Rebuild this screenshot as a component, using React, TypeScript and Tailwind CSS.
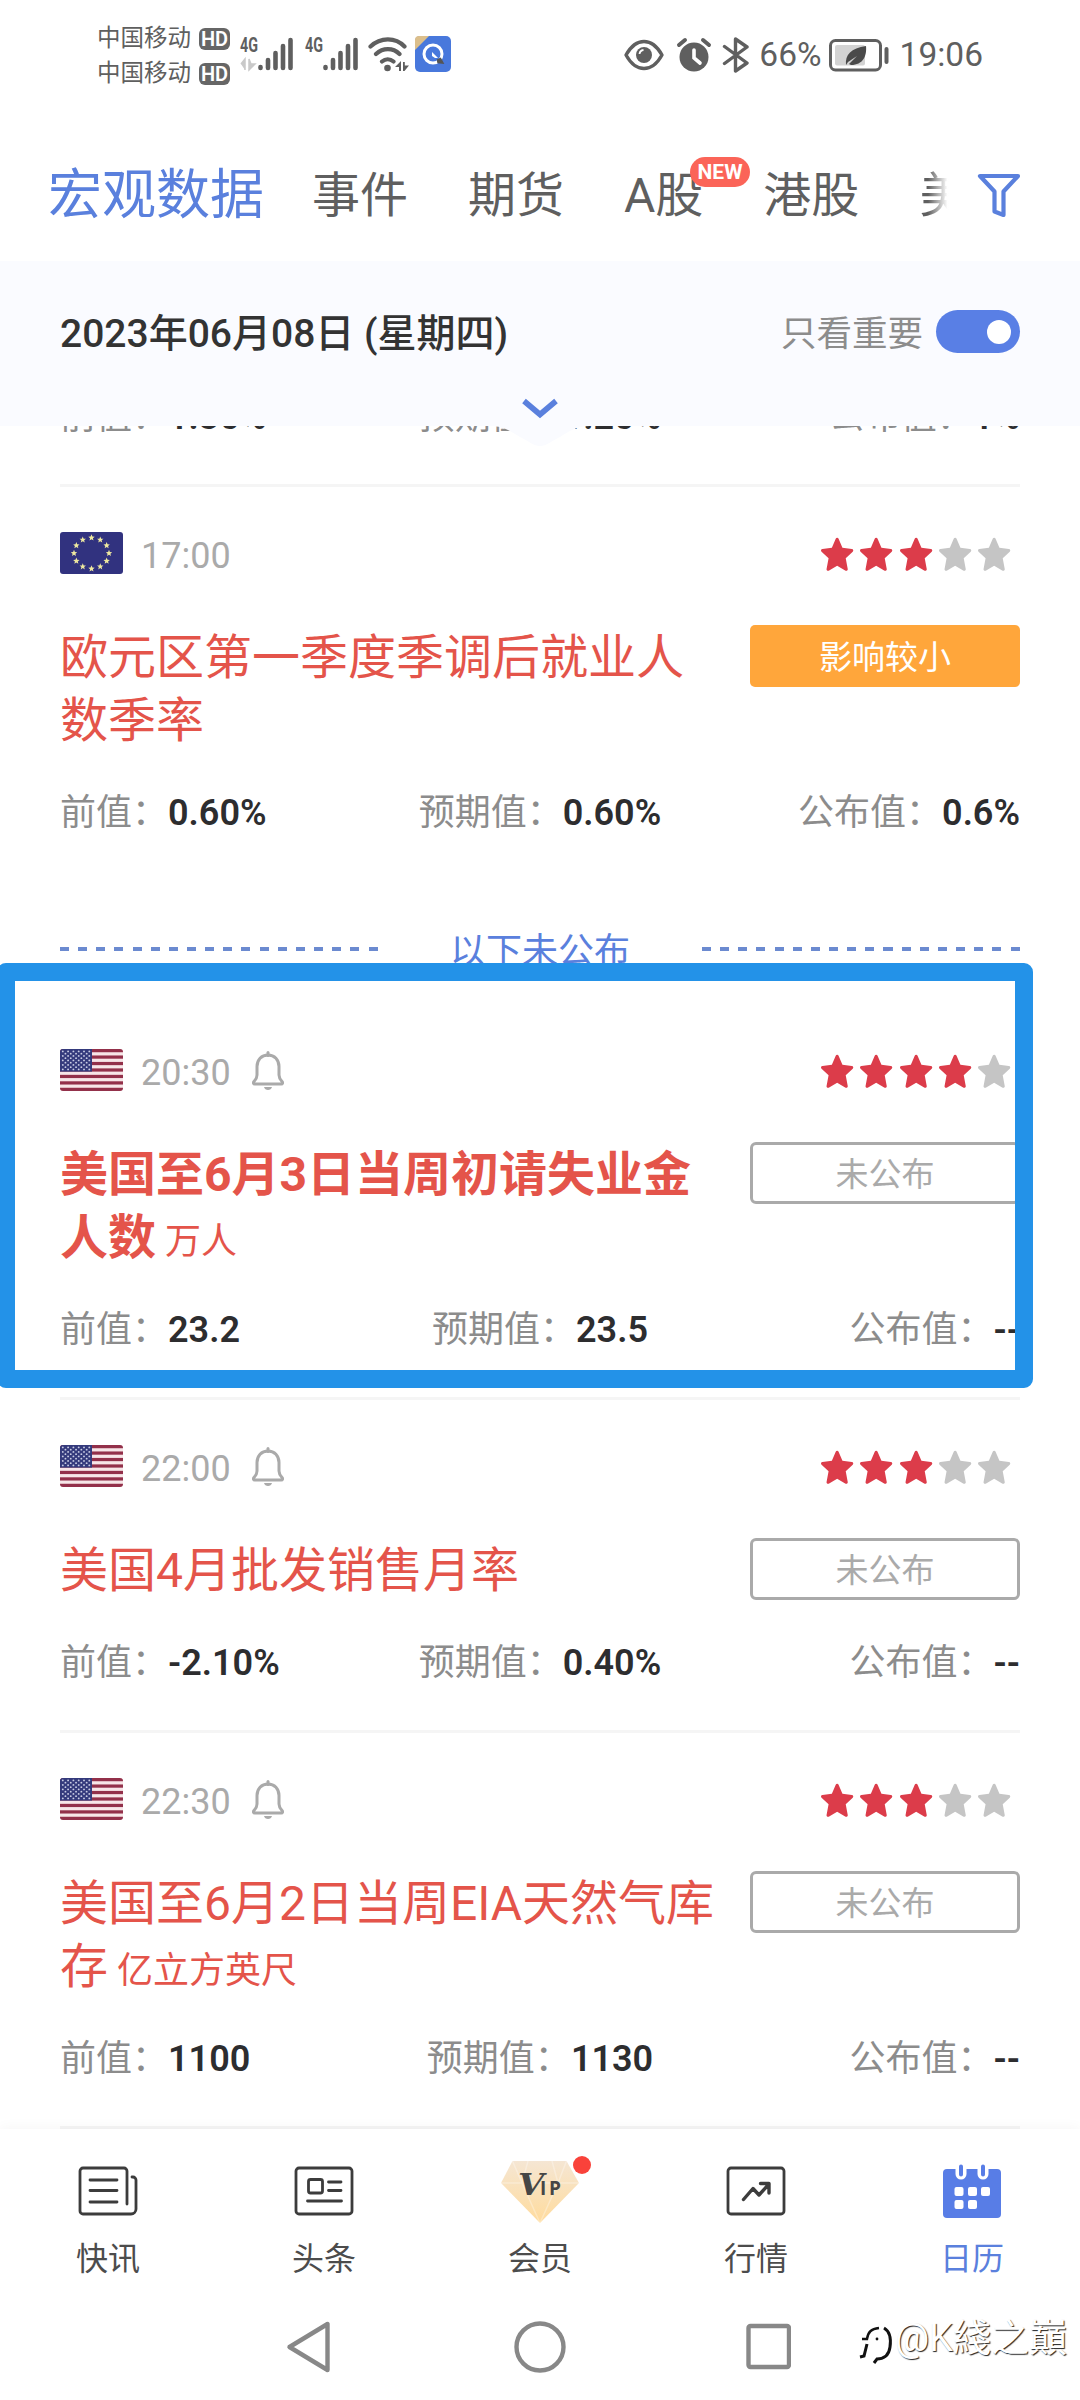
import { ReactNode } from 'react';

type EventItem = {
  country: 'eu' | 'us';
  time: string;
  stars: number;
  title: string;
  unit?: string;
  bold?: boolean;
  bell?: boolean;
  impact?: string;
  values: [string, string, string];
  divider?: boolean;
}

const published: EventItem = {
  country: 'eu',
  time: '17:00',
  stars: 3,
  title: '欧元区第一季度季调后就业人数季率',
  impact: '影响较小',
  values: ['0.60%', '0.60%', '0.6%'],
}

const upcoming: EventItem[] = [
  {
    country: 'us',
    time: '20:30',
    stars: 4,
    title: '美国至6月3日当周初请失业金人数',
    unit: '万人',
    bold: true,
    bell: true,
    values: ['23.2', '23.5', '--'],
    divider: true,
  },
  {
    country: 'us',
    time: '22:00',
    stars: 3,
    title: '美国4月批发销售月率',
    bell: true,
    values: ['-2.10%', '0.40%', '--'],
    divider: true,
  },
  {
    country: 'us',
    time: '22:30',
    stars: 3,
    title: '美国至6月2日当周EIA天然气库存',
    unit: '亿立方英尺',
    bell: true,
    values: ['1100', '1130', '--'],
    divider: true,
  },
]

const STAR = 'M12 1.2c.5 0 .8.3 1 .7l2.7 6 6.6.7c1 .1 1.3 1.200.6 1.900l-4.900 4.400 1.400 7.100c.2.900-.7 1.500-1.500 1.100L12 19.800l-5.900 3.300c-.8.400-1.700-.2-1.500-1.100l1.400-7.100L1.100 10.500c-.7-.7-.4-1.800.6-1.900l6.600-.7 2.700-6c.2-.4.5-.7 1-.7z'

function EuFlag() {
  return (
    <svg width="63" height="42" viewBox="0 0 63 42" className="rounded-[3px]">
      <rect width="63" height="42" fill="#31327f" />
      {Array.from({ length: 12 }, (_, i) => {
        const a = (i * Math.PI) / 6
        return (
          <path
            key={i}
            d="M0-3.200L.9-.9 3.200-.8 1.400.7 2 3 0 1.700-2 3-1.400.7-3.200-.8-.9-.9z"
            transform={`translate(${31.5 + 17.5 * Math.sin(a)} ${21 - 15.5 * Math.cos(a)})`}
            fill="#efe9a0"
          />
        )
      })}
    </svg>
  )
}

function UsFlag() {
  return (
    <svg width="63" height="42" viewBox="0 0 63 42" className="rounded-[3px]">
      <rect width="63" height="42" fill="#f7e6e8" />
      {[0, 1, 2, 3, 4, 5, 6].map((i) => (
        <rect key={i} y={i * 6.46} width="63" height="3.23" fill="#93304a" />
      ))}
      <rect width="32" height="22.6" fill="#343a7c" />
      {Array.from({ length: 9 }, (_, r) =>
        Array.from({ length: r % 2 ? 5 : 6 }, (_, c) => (
          <circle key={`${r}-${c}`} cx={2.8 + (r % 2 ? 2.65 : 0) + c * 5.3} cy={2.4 + r * 2.25} r="0.95" fill="#c9cce4" />
        ))
      )}
    </svg>
  )
}

function Bell() {
  return (
    <svg width="36" height="40" viewBox="0 0 36 40" fill="none" stroke="#aaa" strokeWidth="3" strokeLinejoin="round">
      <path d="M18 1.500v3" strokeLinecap="round" />
      <path d="M18 4c-6.500 0-11 4.800-11 11.500V24c0 2.600-1 4.300-3 6.500-1 1.200-.6 2.500.8 2.500h26.400c1.400 0 1.800-1.300.8-2.500-2-2.200-3-3.900-3-6.500v-8.500C29 8.800 24.500 4 18 4z" />
      <path d="M14 36h8c-.5 2-2 3-4 3s-3.500-1-4-3z" fill="#aaa" stroke="none" />
    </svg>
  )
}

function Stars({ count }: { count: number }) {
  return (
    <div className="flex gap-[5px] mr-[8.500px]">
      {[1, 2, 3, 4, 5].map((n) => (
        <svg key={n} width="34.300" height="36" viewBox="0 0 24 24" preserveAspectRatio="none">
          <path d={STAR} fill={n <= count ? '#dc3c4a' : '#c5c5c5'} />
        </svg>
      ))}
    </div>
  )
}

function Values({ values }: { values: [string, string, string] }) {
  const labels = ['前值：', '预期值：', '公布值：']
  const aligns = ['justify-start', 'justify-center', 'justify-end']
  return (
    <div className="grid grid-cols-3 h-[50px] text-[36px] leading-[52px] whitespace-nowrap">
      {values.map((value, i) => (
        <div key={i} className={`flex ${aligns[i]}`}>
          <span className="text-[#8c8c8c]">{labels[i]}</span>
          <span className="font-semibold text-[#2d2d2f]">{value}</span>
        </div>
      ))}
    </div>
  )
}

function EventCard({ item }: { item: EventItem }) {
  return (
    <div className={`mx-[60px] pt-[45px] pb-[43px] ${item.divider ? 'border-b-[3px] border-[#f5f5f5]' : ''}`}>
      <div className="flex items-center h-[42px]">
        {item.country === 'eu' ? <EuFlag /> : <UsFlag />}
        <span className="ml-[18px] mt-[6px] text-[36px] leading-[42px] text-[#aaa]">{item.time}</span>
        {item.bell && <div className="ml-[19px] mt-[2px]"><Bell /></div>}
        <div className="ml-auto mt-[2px]"><Stars count={item.stars} /></div>
      </div>

      <div className="flex items-start justify-between mt-[51px]">
        <h2 className={`w-[656px] pt-px -mb-px text-[48px] leading-[63px] text-[#e4544a] break-all ${item.bold ? 'font-bold' : 'font-normal'}`}>
          {item.title}
          {item.unit && <span className="ml-[9px] text-[36px] leading-none font-normal">{item.unit}</span>}
        </h2>
        {item.impact ? (
          <div className="w-[270px] h-[62px] rounded-[5px] bg-[#ffa63b] text-white text-[33px] leading-[66px] text-center">
            {item.impact}
          </div>
        ) : (
          <div className="w-[270px] h-[62px] rounded-[6px] border-[3px] border-[#aaa] text-[#aaa] text-[33px] leading-[60px] text-center">
            未公布
          </div>
        )}
      </div>

      <div className="mt-[36px]">
        <Values values={item.values} />
      </div>
    </div>
  )
}

function Signal({ arrows }: { arrows?: boolean }) {
  return (
    <svg width="54" height="36" viewBox="0 0 54 36" className="overflow-visible">
      <text x="0" y="16" fontSize="20" fontWeight="700" fill="#5f5f5f" fontFamily="Roboto, sans-serif" textLength="18" lengthAdjust="spacingAndGlyphs">4G</text>
      {arrows && <path d="M5 34V23l-4 5M9 23v11l6-6h-4z" fill="#c9c9c9" stroke="#c9c9c9" strokeWidth="1.500" />}
      <g stroke="#5f5f5f" strokeWidth="4.600" strokeLinecap="round">
        <path d="M20.500 31v1M28 24v8M35.500 17v15M43 10v22M50.500 4v28" />
      </g>
    </svg>
  )
}

function Carrier() {
  return (
    <div className="flex items-center gap-[8px] h-[35px]">
      <span className="text-[23.500px] leading-[35px] text-[#5f5f5f]">中国移动</span>
      <span className="w-[31px] h-[22px] rounded-[6px] bg-[#666] text-white text-[20px] leading-[22px] font-semibold text-center">HD</span>
    </div>
  )
}

function StatusBar() {
  return (
    <div className="flex items-start h-[108px] pl-[97px] pr-[97px] pt-[21px] text-[#5f5f5f]">
      <div className="flex flex-col">
        <Carrier />
        <Carrier />
      </div>
      <div className="flex mt-[15px] ml-[10px]">
        <Signal arrows />
        <div className="ml-[11px]"><Signal /></div>
        <svg width="42" height="38" viewBox="0 0 42 38" className="ml-[9px]" fill="none" stroke="#5f5f5f" strokeWidth="4.200" strokeLinecap="round">
          <path d="M2.500 10.500c10-9.500 25-9.500 34 0M8 18c7-6.500 17-6.500 23.500 0M14 25.500c3.500-3 8-3 11.500 0" />
          <circle cx="19.500" cy="32" r="3.300" fill="#5f5f5f" stroke="none" />
          <path d="M27 31l6-6v10h-2v-4zM35 26h1.800v3.500H41L36.500 35H35z" fill="#5f5f5f" stroke="none" />
        </svg>
        <svg width="36" height="36" viewBox="0 0 36 36" className="ml-[5px]">
          <rect width="36" height="36" rx="5" fill="#4878dc" />
          <path d="M4 0h10L0 14V4a4 4 0 0 1 4-4z" fill="#dcbf8b" />
          <circle cx="18" cy="18" r="9" fill="none" stroke="#fff" strokeWidth="3" />
          <path d="M17 16l6 6-3 0-3-2z" fill="#fff" />
          <path d="M22.500 24l3-1.500 2.500 4.500-5-.5z" fill="#555" stroke="#555" strokeWidth="1.500" />
        </svg>
      </div>

      <div className="flex items-center ml-auto mt-[14px] h-[40px]">
        <svg width="40" height="32" viewBox="0 0 40 32">
          <path d="M2 16C7 7 13 2.500 20 2.500S33 7 38 16c-5 9-11 13.500-18 13.500S7 25 2 16z" fill="none" stroke="#5f5f5f" strokeWidth="3.400" strokeLinejoin="round" />
          <circle cx="20" cy="16" r="8" fill="#5f5f5f" />
          <path d="M15.500 15a4.500 4.500 0 0 1 4-4" stroke="#fff" strokeWidth="1.800" fill="none" />
        </svg>
        <svg width="36" height="36" viewBox="0 0 36 36" className="ml-[12px]">
          <circle cx="18" cy="20" r="14.500" fill="#5f5f5f" />
          <path d="M3 8l6-5M33 8l-6-5" stroke="#5f5f5f" strokeWidth="4" strokeLinecap="round" />
          <path d="M18 13v8l6 5" stroke="#fff" strokeWidth="3.600" fill="none" strokeLinecap="round" />
        </svg>
        <svg width="28" height="36" viewBox="0 0 28 36" className="ml-[10px]" fill="none" stroke="#5f5f5f" strokeWidth="3.400" strokeLinejoin="round" strokeLinecap="round">
          <path d="M2.500 9.500L25 26l-11.500 8V2L25 10 2.500 26.500" />
        </svg>
        <span className="ml-[9px] text-[33.500px] leading-[40px]">66%</span>
        <svg width="60" height="33" viewBox="0 0 60 33" className="ml-[7px]">
          <rect x="1.500" y="1.500" width="50" height="29.500" rx="5" fill="none" stroke="#5f5f5f" strokeWidth="3" />
          <rect x="6" y="6" width="30" height="20.500" rx="2" fill="#d3d3d3" />
          <rect x="55.500" y="8" width="4" height="17" rx="2" fill="#5f5f5f" />
          <path d="M17 26c-1-10 5-17 20-19 1 10-3 19-15 19l-2-1 8-8-9 6z" fill="#4a4a4a" />
        </svg>
        <span className="ml-[11px] text-[33.500px] leading-[40px]">19:06</span>
      </div>
    </div>
  )
}

function Tabs() {
  return (
    <div className="flex items-center h-[153px] pl-[48px] pr-[59px] pt-[22px] text-[48px] leading-[60px] text-[#5f5f5f] whitespace-nowrap">
      <span className="text-[54px] text-[#5a80dd]">宏观数据</span>
      <span className="ml-[48px]">事件</span>
      <span className="ml-[60px]">期货</span>
      <span className="relative ml-[60px]">
        A股
        <span className="absolute left-[66px] -top-[9px] w-[60px] h-[30px] rounded-full bg-[#fb6458] text-white text-[21px] leading-[31px] font-bold text-center">
          NEW
        </span>
      </span>
      <span className="ml-[60px]">港股</span>
      <span className="ml-[60px] w-[30px] overflow-hidden bg-gradient-to-r from-[#5f5f5f] from-30% to-white/10 to-95% bg-clip-text text-transparent">美</span>
      <svg width="44" height="44" viewBox="0 0 44 44" className="ml-auto -mt-[2px]" fill="none" stroke="#5a80dd" strokeWidth="4.200" strokeLinejoin="round">
        <path d="M3 3h38L26.500 18.500V42l-9-3.500v-20z" />
      </svg>
    </div>
  )
}

function DateHeader() {
  return (
    <div className="relative z-10 h-[165px] bg-[#fafbff] px-[60px]">
      <div className="flex items-center justify-between pt-[43px]">
        <span className="text-[39px] leading-[60px] font-medium text-[#333]">2023年06月08日 (星期四)</span>
        <div className="flex items-center">
          <span className="text-[35.500px] leading-[60px] text-[#8c8c8c]">只看重要</span>
          <span className="flex items-center justify-end w-[84px] h-[43px] ml-[13px] -mt-[5px] pr-[9px] rounded-full bg-[#597fe5]">
            <span className="w-[24px] h-[24px] rounded-full bg-white" />
          </span>
        </div>
      </div>
      {/* pull-down handle hanging below the bar */}
      <svg width="100" height="60" viewBox="0 0 100 60" className="absolute left-[490px] top-[127px]">
        <path d="M0 38h100c-14 0-22 6-30 11-8 4-14 9-20 9s-12-5-20-9C22 44 14 38 0 38z" fill="#fafbff" />
        <path d="M34 13l16 13.500 16-13.500" fill="none" stroke="#5a80dd" strokeWidth="5.600" />
      </svg>
    </div>
  )
}

const iconProps = { fill: 'none', stroke: '#3c3c3c', strokeWidth: 2.8, strokeLinecap: 'round', strokeLinejoin: 'round' } as const

const navIcons: { label: string; icon: ReactNode; active?: boolean }[] = [
  {
    label: '快讯',
    icon: (
      <svg width="60" height="50" viewBox="0 0 60 50" {...iconProps}>
        <path d="M49 38V5a3 3 0 0 0-3-3H5a3 3 0 0 0-3 3v40a3 3 0 0 0 3 3h48a5 5 0 0 0 5-5V14a3 3 0 0 0-3-3h-1" />
        <path d="M12 14h27M12 24.500h27M12 36h27" />
      </svg>
    ),
  },
  {
    label: '头条',
    icon: (
      <svg width="60" height="50" viewBox="0 0 60 50" {...iconProps}>
        <rect x="2" y="2" width="56" height="46" rx="3" />
        <rect x="14.500" y="13.500" width="14" height="13.500" rx="2" />
        <path d="M34.500 16h12.500M34.500 24.500h12.500M13.500 35h34" />
      </svg>
    ),
  },
  {
    label: '会员',
    icon: (
      <svg width="84" height="68" viewBox="0 0 84 68" className="-mt-[7px]">
        <defs>
          <linearGradient id="gem" x1="0" y1="0" x2="0" y2="1">
            <stop offset="0" stopColor="#f5e6d3" />
            <stop offset="1" stopColor="#ffdb9c" />
          </linearGradient>
        </defs>
        <path d="M14.500 2h54L81 24 42 64 3 24z" fill="url(#gem)" />
        <path d="M14.500 2L24 24 42 64 60 24 68.500 2M3 24h78M30 2l-6 22M54 2l6 22" fill="none" stroke="#fff" strokeOpacity=".3" strokeWidth="1.500" />
        <text x="20" y="36" fontSize="30" fontWeight="700" fontStyle="italic" fill="#464646" fontFamily="DejaVu Serif, serif" textLength="26" lengthAdjust="spacingAndGlyphs">V</text>
        <text x="42" y="36" fontSize="19" fontWeight="700" fill="#464646" fontFamily="Open Sans, sans-serif" textLength="21">IP</text>
      </svg>
    ),
  },
  {
    label: '行情',
    icon: (
      <svg width="60" height="50" viewBox="0 0 60 50" {...iconProps}>
        <rect x="2" y="2" width="56" height="46" rx="3" />
        <path d="M17.500 33.500l9.500-11 6 6.500L43 18M34.500 17.500H43V27" strokeWidth="3.400" />
      </svg>
    ),
  },
  {
    label: '日历',
    active: true,
    icon: (
      <svg width="60" height="56" viewBox="0 0 60 56" className="-mt-[3px]">
        <rect x="1" y="6" width="58" height="49" rx="4" fill="#587de6" />
        <g strokeLinecap="round">
          <path d="M19 3v8M41 3v8" stroke="#fff" strokeWidth="11" />
          <path d="M19 3.500v8M41 3.500v8" stroke="#587de6" strokeWidth="4" />
        </g>
        <g fill="#fff">
          <rect x="12.500" y="24" width="9" height="9" rx="2" />
          <rect x="26" y="24" width="9" height="9" rx="2" />
          <rect x="39" y="24" width="9" height="9" rx="2" />
          <rect x="12.500" y="37" width="9" height="9" rx="2" />
          <rect x="26" y="37" width="9" height="9" rx="2" />
        </g>
      </svg>
    ),
  },
]

function BottomNav() {
  return (
    <div className="relative z-10 grid grid-cols-5 h-[163px] bg-white shadow-[0_-2px_12px_rgba(0,0,0,0.035)]">
      {navIcons.map((nav) => (
        <div key={nav.label} className="relative flex flex-col items-center pt-[37px]">
          <div className="h-[69px]">{nav.icon}</div>
          {nav.label === '会员' && <span className="absolute left-[141px] top-[27px] w-[18px] h-[18px] rounded-full bg-[#f9423a]" />}
          <span className={`text-[32px] leading-[48px] ${nav.active ? 'text-[#5a80dd]' : 'text-[#4c4c4c]'}`}>{nav.label}</span>
        </div>
      ))}
    </div>
  )
}

function SystemKeys() {
  return (
    <div className="relative z-10 flex items-center h-[108px] pt-[2px] pl-[285px] bg-white">
      <svg width="506" height="54" viewBox="0 0 506 54" fill="none" stroke="#888" strokeWidth="4.400" strokeLinejoin="round">
        <path d="M42.500 4v46L4.500 27z" />
        <circle cx="255" cy="27" r="23.500" />
        <rect x="463.500" y="6" width="40.500" height="41" rx="2" />
      </svg>
      <div className="absolute left-[858px] top-[19px] flex items-center">
        <svg width="38" height="44" viewBox="0 0 38 44" fill="none" stroke="#111" strokeWidth="2.400" className="mt-[8px]">
          <path d="M4 19h5c1-7 4-10 12-11" />
          <path d="M26 8c7 4 7 12 6 19-1 9-7 12-13 12l-3 4M9 24L6 36l-4 1" strokeWidth="3" />
          <circle cx="19" cy="19" r="1.400" fill="#111" stroke="none" />
        </svg>
        <span className="-ml-px text-[38px] leading-[54px] text-white whitespace-nowrap [text-shadow:1px_1px_1px_#222]">@K綫之巔</span>
      </div>
    </div>
  )
}

export default function App() {
  return (
    <div className="relative flex flex-col w-[1080px] h-[2400px] overflow-hidden bg-white font-['Roboto','Noto_Sans_CJK_SC',sans-serif]">
      <StatusBar />
      <Tabs />
      <DateHeader />

      {/* Event list, scrolled under the date bar */}
      <div className="relative flex-1 min-h-0 overflow-hidden">
        <div className="mx-[60px] -mt-[35px] pb-[43px] border-b-[3px] border-[#f5f5f5]">
          <Values values={['1.30%', '1.20%', '1%']} />
        </div>
        <EventCard item={published} />
        <div className="flex items-center justify-between h-[124px] px-[60px] pt-[19px]">
          <span className="w-[318px] h-[4px] -mt-[6px] bg-[repeating-linear-gradient(90deg,#6b8ad0_0_9px,transparent_9px_18.15px)]" />
          <span className="text-[36px] leading-[50px] text-[#5a80dd]">以下未公布</span>
          <span className="w-[318px] h-[4px] -mt-[6px] bg-[repeating-linear-gradient(90deg,#6b8ad0_0_9px,transparent_9px_18.15px)]" />
        </div>
        {upcoming.map((item) => (
          <EventCard key={item.time} item={item} />
        ))}

        {/* Marker frame around the highlighted release */}
        <div className="absolute -left-[3px] top-[537px] w-[1036px] h-[425px] border-[18px] border-[#2392e8] rounded-[9px]" />
      </div>

      <BottomNav />
      <SystemKeys />
    </div>
  )
}
